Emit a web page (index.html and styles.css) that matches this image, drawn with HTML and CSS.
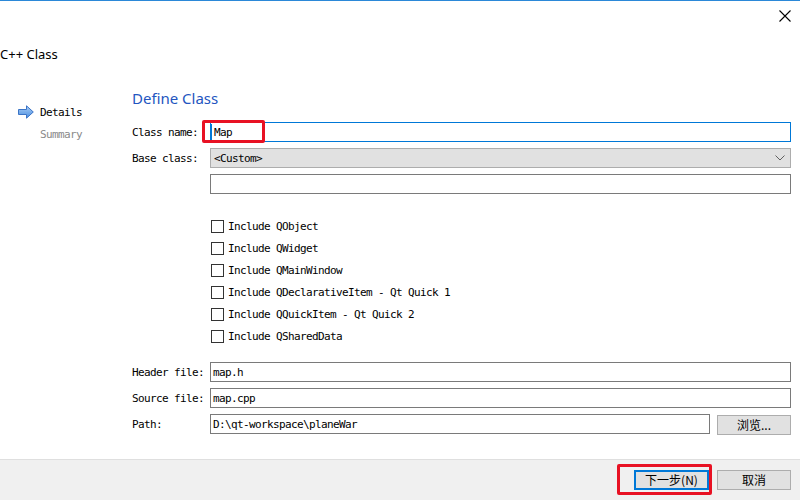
FILE: index.html
```html
<!DOCTYPE html>
<html>
<head>
<meta charset="utf-8">
<link rel="stylesheet" href="styles.css">
</head>
<body>
<div class="dialog">
  <div class="titlebar">
    <svg class="close" width="12" height="12" viewBox="0 0 12 12"><path d="M0.5 0.5 L11.5 11.5 M11.5 0.5 L0.5 11.5" stroke="#000" stroke-width="1.1" fill="none"/></svg>
  </div>
  <div class="heading">C++ Class</div>
  <div class="main">
    <nav class="steps">
      <div class="step current">
        <svg class="arrow" width="16" height="14" viewBox="0 0 16 14"><defs><linearGradient id="g" x1="0" y1="0" x2="0" y2="1"><stop offset="0" stop-color="#a9cdf6"/><stop offset="1" stop-color="#4a8ee0"/></linearGradient></defs><path d="M0.5 4.5 H8.5 V0.8 L15.3 7 L8.5 13.2 V9.5 H0.5 Z" fill="url(#g)" stroke="#3b74c6" stroke-width="1"/></svg>
        <span>Details</span>
      </div>
      <div class="step"><span class="slot"></span><span>Summary</span></div>
    </nav>
    <section class="page">
      <h1 class="title">Define Class</h1>
      <div class="form">
        <label class="lbl">Class name:</label>
        <div class="field focus"><span class="caret"></span>Map<span class="mark"></span></div>

        <label class="lbl">Base class:</label>
        <div class="combo"><span>&lt;Custom&gt;</span>
          <svg width="10" height="6" viewBox="0 0 10 6"><path d="M0.5 0.5 L5 5 L9.5 0.5" stroke="#606060" stroke-width="1" fill="none"/></svg>
        </div>

        <span class="lbl"></span>
        <div class="field plain"></div>

        <div class="checks">
          <div class="check"><span class="box"></span>Include QObject</div>
          <div class="check"><span class="box"></span>Include QWidget</div>
          <div class="check"><span class="box"></span>Include QMainWindow</div>
          <div class="check"><span class="box"></span>Include QDeclarativeItem - Qt Quick 1</div>
          <div class="check"><span class="box"></span>Include QQuickItem - Qt Quick 2</div>
          <div class="check"><span class="box"></span>Include QSharedData</div>
        </div>

        <label class="lbl">Header file:</label>
        <div class="field">map.h</div>

        <label class="lbl">Source file:</label>
        <div class="field">map.cpp</div>

        <label class="lbl">Path:</label>
        <div class="pathrow">
          <div class="field grow">D:\qt-workspace\planeWar</div>
          <button class="btn browse">浏览...</button>
        </div>
      </div>
    </section>
  </div>
  <footer class="footer">
    <button class="btn default">下一步(N)<span class="mark2"></span></button>
    <button class="btn">取消</button>
  </footer>
</div>
</body>
</html>
```

FILE: styles.css
```css
* { box-sizing: border-box; }
html, body { margin: 0; padding: 0; background: #fff; }
body { width: 800px; height: 500px; overflow: hidden; }

.dialog {
  height: 500px;
  display: flex;
  flex-direction: column;
  border-top: 1px solid #2b88d8;
}

.titlebar {
  height: 30px;
  display: flex;
  justify-content: flex-end;
  align-items: center;
  padding-right: 9px;
}
.close { display: block; }

.heading {
  margin-top: 15px;
  height: 16px;
  line-height: 16px;
  font-family: "Noto Sans", sans-serif;
  font-size: 13px;
  color: #000;
}

.main {
  flex: 1;
  display: flex;
  padding-top: 26px;
}

.steps {
  width: 132px;
  flex: none;
  padding-top: 13px;
  padding-left: 18px;
}
.step {
  height: 22px;
  display: flex;
  align-items: center;
  gap: 6px;
  font-family: "DejaVu Sans Mono", monospace;
  font-size: 11px;
  letter-spacing: -0.62px;
  color: #8a8a8a;
}
.step.current { color: #000; }
.arrow { display: block; flex: none; }
.slot { width: 16px; flex: none; }

.page {
  flex: 1;
  padding-right: 9px;
}
.title {
  margin: 0 0 14px 0;
  height: 20px;
  line-height: 20px;
  font-family: "Noto Sans", sans-serif;
  font-weight: normal;
  font-size: 15px;
  color: #2355c0;
}

.form {
  display: grid;
  grid-template-columns: 78px 1fr;
  grid-auto-rows: auto;
  row-gap: 6px;
  font-family: "DejaVu Sans Mono", monospace;
  font-size: 11px;
  letter-spacing: -0.62px;
  color: #000;
}
.lbl { display: flex; align-items: center; height: 20px; }

.field {
  position: relative;
  height: 20px;
  border: 1px solid #7a7a7a;
  background: #fff;
  display: flex;
  align-items: center;
  padding-left: 2px;
}
.field.focus { border-color: #0078d7; padding-left: 0; }
.caret { width: 1px; height: 16px; background: #0078d7; margin-right: 2px; }
.mark {
  position: absolute;
  left: -9px;
  top: -3px;
  width: 63px;
  height: 23px;
  border: 3px solid #e81123;
  border-radius: 2px;
}

.combo {
  height: 20px;
  border: 1px solid #adadad;
  background: #e1e1e1;
  display: flex;
  align-items: center;
  justify-content: space-between;
  padding: 0 5px 0 3px;
}
.combo svg { display: block; }

.checks {
  grid-column: 2;
  height: 132px;
  margin: 15px 0 9px 0;
  display: flex;
  flex-direction: column;
}
.check {
  height: 22px;
  display: flex;
  align-items: center;
  gap: 4px;
}
.box {
  width: 13px;
  height: 13px;
  margin-left: 1px;
  border: 1px solid #333;
  background: #fff;
}

.pathrow { display: flex; gap: 7px; }
.grow { flex: none; width: 500px; }

.btn {
  height: 20px;
  width: 74px;
  border: 1px solid #adadad;
  background: #e1e1e1;
  font-family: "Noto Sans CJK SC", sans-serif;
  font-size: 12px;
  line-height: 16px;
  color: #000;
  padding: 0;
  margin: 0;
  letter-spacing: 0;
}
.browse { margin-top: 1px; }

.footer {
  height: 41px;
  flex: none;
  border-top: 1px solid #dfdfdf;
  background: #f0f0f0;
  display: flex;
  justify-content: flex-end;
  gap: 8px;
  padding: 10px 9px 0 0;
}
.default {
  position: relative;
  width: 75px;
  border: 2px solid #0078d7;
}
.mark2 {
  position: absolute;
  left: -19px;
  top: -8px;
  width: 95px;
  height: 31px;
  border: 3px solid #e81123;
  border-radius: 2px;
}
```
